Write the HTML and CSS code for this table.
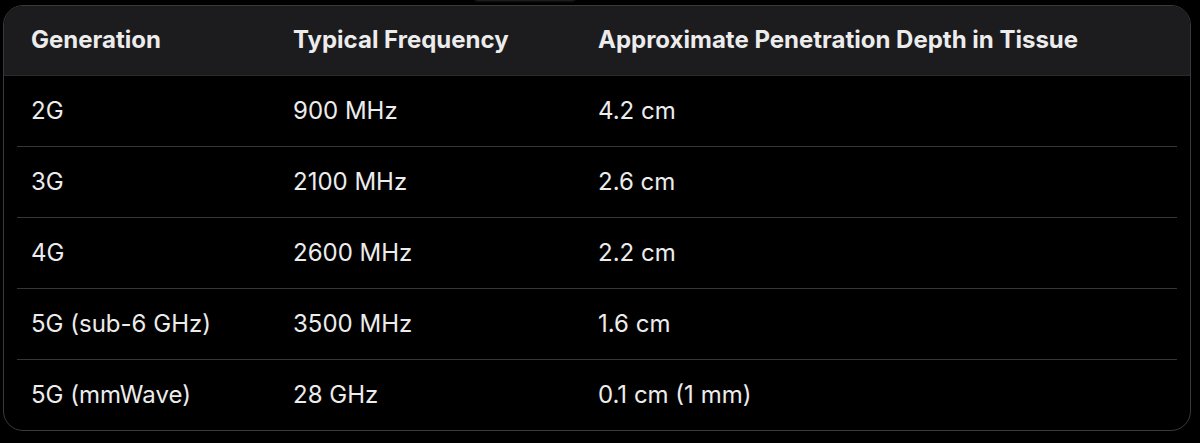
FILE: index.html
```html
<!DOCTYPE html>
<html lang="en">
<head>
<meta charset="utf-8">
<title>Penetration depth</title>
<link rel="stylesheet" href="styles.css">
</head>
<body>
<div class="page">
  <div class="glow"></div>
  <div class="table">
    <div class="row head">
      <div class="cell">Generation</div>
      <div class="cell">Typical Frequency</div>
      <div class="cell">Approximate Penetration Depth in Tissue</div>
    </div>
    <div class="body">
      <div class="row">
        <div class="cell">2G</div>
        <div class="cell">900 MHz</div>
        <div class="cell">4.2 cm</div>
      </div>
      <div class="row">
        <div class="cell">3G</div>
        <div class="cell">2100 MHz</div>
        <div class="cell">2.6 cm</div>
      </div>
      <div class="row">
        <div class="cell">4G</div>
        <div class="cell">2600 MHz</div>
        <div class="cell">2.2 cm</div>
      </div>
      <div class="row">
        <div class="cell">5G (sub-6 GHz)</div>
        <div class="cell">3500 MHz</div>
        <div class="cell">1.6 cm</div>
      </div>
      <div class="row">
        <div class="cell">5G (mmWave)</div>
        <div class="cell">28 GHz</div>
        <div class="cell">0.1 cm (1 mm)</div>
      </div>
    </div>
  </div>
</div>
</body>
</html>
```
FILE: styles.css
```css
html, body {
  margin: 0;
  padding: 0;
  background: #000;
}
body {
  width: 1200px;
  height: 443px;
  overflow: hidden;
  font-family: Inter, "Noto Sans", "Liberation Sans", sans-serif;
  color: #ececec;
}
.page {
  position: relative;
  padding: 5px 9px 12px 3px;
}
.glow {
  position: absolute;
  left: 475px;
  top: -3px;
  width: 100px;
  height: 4px;
  border-radius: 4px;
  background: #2a2a2c;
  filter: blur(1px);
}
.table {
  border: 1px solid #3a3a3c;
  border-radius: 20px;
  overflow: hidden;
  background: #000;
}
.row {
  display: grid;
  grid-template-columns: 262px 305px 1fr;
  align-items: center;
  height: 70px;
}
.head {
  background: #1c1c1f;
  padding: 0 13px;
  font-weight: 700;
  border-bottom: 1px solid #2a2a2d;
  height: 69px;
}
.body {
  padding: 0 13px;
}
.body .row + .row {
  border-top: 1px solid #363638;
}
.cell {
  padding-left: 14px;
  font-size: 24px;
  line-height: 1.2;
}
```
